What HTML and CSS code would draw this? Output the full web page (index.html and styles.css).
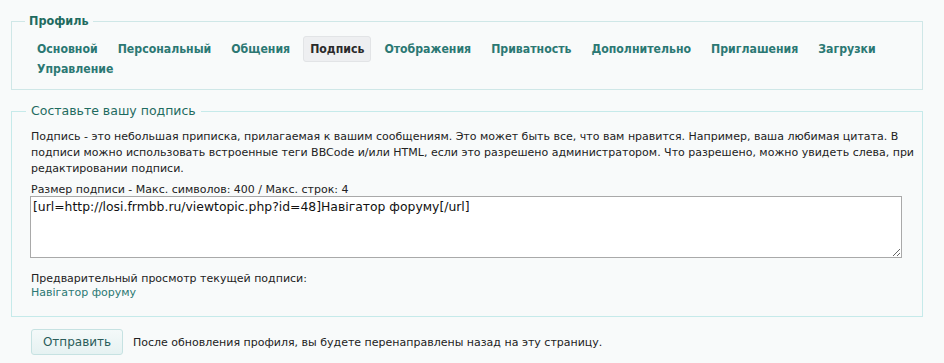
FILE: index.html
```html
<!DOCTYPE html>
<html lang="ru">
<head>
<meta charset="utf-8">
<title>Профиль — Подпись</title>
<link rel="stylesheet" href="styles.css">
</head>
<body>
<div class="page">
  <fieldset class="box menu-box">
    <legend class="menu-legend">Профиль</legend>
    <ul class="tabs">
      <li class="tab"><a href="#">Основной</a></li>
      <li class="tab"><a href="#">Персональный</a></li>
      <li class="tab"><a href="#">Общения</a></li>
      <li class="tab active"><a href="#">Подпись</a></li>
      <li class="tab"><a href="#">Отображения</a></li>
      <li class="tab"><a href="#">Приватность</a></li>
      <li class="tab"><a href="#">Дополнительно</a></li>
      <li class="tab"><a href="#">Приглашения</a></li>
      <li class="tab"><a href="#">Загрузки</a></li>
      <li class="tab"><a href="#">Управление</a></li>
    </ul>
  </fieldset>

  <fieldset class="box sig-box">
    <legend class="sig-legend">Составьте вашу подпись</legend>
    <p class="intro">Подпись - это небольшая приписка, прилагаемая к вашим сообщениям. Это может быть все, что вам нравится. Например, ваша любимая цитата. В<br>подписи можно использовать встроенные теги BBCode и/или HTML, если это разрешено администратором. Что разрешено, можно увидеть слева, при<br>редактировании подписи.</p>
    <label class="field-label" for="sig">Размер подписи - Макс. символов: 400 / Макс. строк: 4</label>
    <textarea id="sig" class="sig-input">[url=http://losi.frmbb.ru/viewtopic.php?id=48]Навігатор форуму[/url]</textarea>
    <p class="preview-label">Предварительный просмотр текущей подписи:</p>
    <a class="preview-link" href="#">Навігатор форуму</a>
  </fieldset>

  <div class="actions">
    <button class="submit" type="button">Отправить</button>
    <span class="note">После обновления профиля, вы будете перенаправлены назад на эту страницу.</span>
  </div>
</div>
</body>
</html>
```

FILE: styles.css
```css
html, body {
  margin: 0;
  padding: 0;
  background: #f8fafa;
}

body {
  font-family: "DejaVu Sans", sans-serif;
  font-size: 11px;
  color: #222;
}

.page {
  padding: 14px 21px 0 11px;
}

.box {
  margin: 0;
  min-width: 0;
}

/* ---------- profile menu ---------- */
.menu-box {
  border: 1px solid #cfe7e7;
  padding: 11px 0 10px 18px;
}

.menu-legend {
  font-family: "DejaVu Sans Condensed", "DejaVu Sans", sans-serif;
  font-weight: bold;
  font-size: 12.5px;
  line-height: 14px;
  color: #1f6b60;
  padding: 0 4px;
  margin-left: -5px;
}

.tabs {
  list-style: none;
  margin: 0;
  padding: 0;
  display: flex;
  flex-wrap: wrap;
  column-gap: 6px;
}

.tab {
  height: 20px;
}

.tab a {
  display: block;
  margin: -3px 0;
  padding: 0 6px;
  line-height: 24px;
  border: 1px solid transparent;
  border-radius: 3px;
  font-family: "DejaVu Sans Condensed", "DejaVu Sans", sans-serif;
  font-weight: bold;
  font-size: 12.2px;
  color: #2b7873;
  text-decoration: none;
  white-space: nowrap;
}

.tab.active a {
  color: #2a2a2a;
  background: #eeeff1;
  border-color: #e2e4e6;
}

/* ---------- signature ---------- */
.sig-box {
  margin-top: 13px;
  border: 1px solid #c6eaea;
  padding: 10px 0 16px 19px;
}

.sig-legend {
  font-size: 12.5px;
  line-height: 16px;
  color: #1f6b60;
  padding: 0 5px;
  margin-left: -5px;
}

.intro {
  margin: 0;
  line-height: 16px;
  white-space: nowrap;
}

.field-label {
  display: block;
  margin-top: 6px;
  line-height: 13px;
}

.sig-input {
  display: block;
  box-sizing: border-box;
  width: 872px;
  height: 62px;
  margin: 0 0 0 -1px;
  padding: 2px 2px;
  border: 1px solid #a9a9a9;
  background: #fff;
  font-family: "DejaVu Sans", sans-serif;
  font-size: 12.4px;
  line-height: 16px;
  color: #111;
  resize: vertical;
}

.preview-label {
  margin: 14px 0 0 0;
  line-height: 14px;
}

.preview-link {
  display: block;
  color: #2b7873;
  text-decoration: none;
  line-height: 14px;
}

/* ---------- actions ---------- */
.actions {
  display: flex;
  align-items: center;
  gap: 10px;
  padding: 12px 0 0 20px;
}

.submit {
  box-sizing: border-box;
  width: 92px;
  height: 26px;
  border: 1px solid #c6e2e2;
  border-radius: 3px;
  background: linear-gradient(#f4f9f9, #e6f2f2);
  color: #2b5d5a;
  font-family: "DejaVu Sans", sans-serif;
  font-size: 12px;
  padding: 0;
}

.note {
  font-size: 11px;
}
```
